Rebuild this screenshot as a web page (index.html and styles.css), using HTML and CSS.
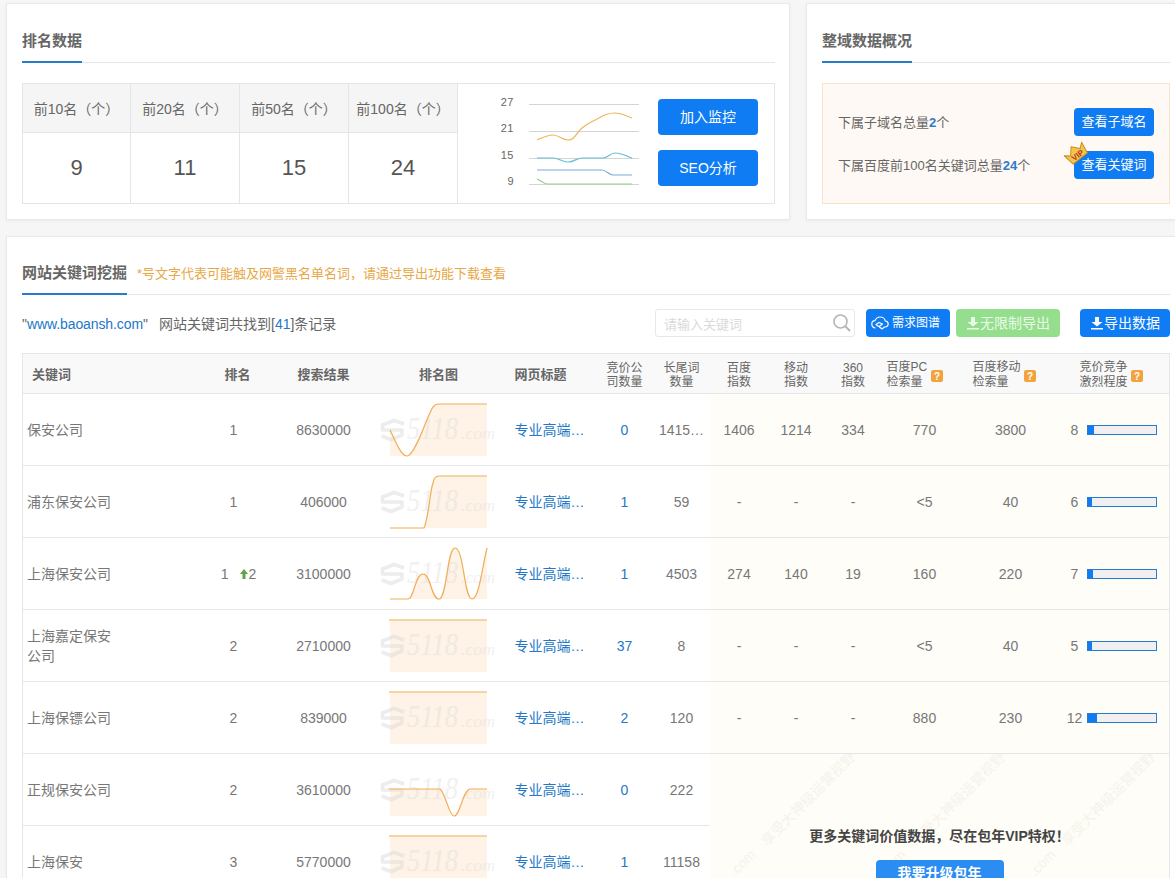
FILE: index.html
```html
<!DOCTYPE html>
<html lang="en">
<head>
    <meta charset="UTF-8">
    <title>网站关键词挖掘</title>
    <link rel="stylesheet" href="styles.css">
</head>
<body>
    <svg class="defs">
        <symbol id="wm" viewBox="0 0 120 72">
            <path d="M24 30 L14 26.500 L2.500 31 L2.500 36 H22 V41 L11 45.500 L1.500 42" fill="none" stroke="#dcdcdc" stroke-width="3.600" stroke-linejoin="round" opacity=".5"/>
            <text x="27" y="45" class="wm-num" textLength="51" lengthAdjust="spacingAndGlyphs">5118</text>
            <text x="81" y="45" class="wm-dom" textLength="34" lengthAdjust="spacingAndGlyphs">.com</text>
        </symbol>
        <symbol id="dl" viewBox="0 0 14 14">
            <path d="M5 1 H9 V6 H12.5 L7 10.5 L1.500 6 H5 Z M1 12 H13 V13.500 H1 Z" fill="currentColor"/>
        </symbol>
        <symbol id="hint" viewBox="0 0 12 12">
            <rect width="12" height="12" rx="2" fill="#f3a33e"/>
            <text x="6" y="10" class="hint-mark">?</text>
        </symbol>
    </svg>

    <div class="top-row">
        <section class="card">
            <div class="card-head"><h2 class="card-title">排名数据</h2></div>
            <div class="rank-box">
                <div class="rank-stats">
                    <div class="stat"><div class="stat-label">前10名（个）</div><div class="stat-value">9</div></div>
                    <div class="stat"><div class="stat-label">前20名（个）</div><div class="stat-value">11</div></div>
                    <div class="stat"><div class="stat-label">前50名（个）</div><div class="stat-value">15</div></div>
                    <div class="stat"><div class="stat-label">前100名（个）</div><div class="stat-value">24</div></div>
                </div>
                <svg class="trend" width="188" height="118" viewBox="0 0 188 118">
                    <g class="trend-grid">
                        <path d="M71 19.500 H181 M71 46.500 H181 M71 73.500 H181 M71 99.500 H181"/>
                    </g>
                    <text x="56" y="21" class="trend-label">27</text>
                    <text x="56" y="47" class="trend-label">21</text>
                    <text x="56" y="74" class="trend-label">15</text>
                    <text x="56" y="100" class="trend-label">9</text>
                    <path class="line" stroke="#f0b45a" d="M79 55 C86 52 90 50 95 50 C101 50 104 55 110 55 C117 55 118 48 124 43 C130 38 133 37 139 34 C146 30 150 28 157 28 C164 28 168 31 174 33"/>
                    <path class="line" stroke="#62bfd8" d="M79 73 H95 C101 73 104 77 110 77 C116 77 119 73 124 73 H145 C150 73 152 68 157 68 C164 68 168 71 174 73"/>
                    <path class="line" stroke="#7ea8dc" d="M79 85 H144 C148 85 151 90 155 90 H174"/>
                    <path class="line" stroke="#98cf8e" d="M79 94 C83 96 86 99 90 99 H174"/>
                </svg>
                <div class="rank-actions">
                    <a class="btn btn-big">加入监控</a>
                    <a class="btn btn-big">SEO分析</a>
                </div>
            </div>
        </section>

        <section class="card card-side">
            <div class="card-head"><h2 class="card-title">整域数据概况</h2></div>
            <div class="domain-box">
                <div class="domain-row">
                    <span>下属子域名总量<b>2</b>个</span>
                    <a class="btn btn-small">查看子域名</a>
                </div>
                <div class="domain-row">
                    <span>下属百度前100名关键词总量<b>24</b>个</span>
                    <a class="btn btn-small btn-vip">
                        <svg class="crown" width="26" height="26" viewBox="0 0 26 26">
                            <g transform="rotate(-38 13 13)">
                                <path d="M2 8 L7 12 L13 5 L19 12 L24 8 L22 20 H4 Z" fill="#f3c44f" stroke="#c98d1e" stroke-linejoin="round"/>
                                <text x="13" y="18.500" class="crown-text">VIP</text>
                            </g>
                        </svg>
                        查看关键词
                    </a>
                </div>
            </div>
        </section>
    </div>

    <section class="card card-main">
        <div class="card-head card-head-main">
            <h2 class="card-title">网站关键词挖掘</h2>
            <span class="head-note">*号文字代表可能触及网警黑名单名词，请通过导出功能下载查看</span>
        </div>

        <div class="toolbar">
            <div class="result-info">"<a class="site-link">www.baoansh.com</a>"<span class="result-count">网站关键词共找到[<a>41</a>]条记录</span></div>
            <div class="search-box">
                <span class="search-holder">请输入关键词</span>
                <svg width="20" height="20" viewBox="0 0 20 20"><circle cx="8.500" cy="8.500" r="6.500" fill="none" stroke="#b5b5b5" stroke-width="1.600"/><path d="M13.500 13.500 L18 18" stroke="#b5b5b5" stroke-width="2"/></svg>
            </div>
            <a class="btn btn-tool btn-map">
                <svg width="18" height="14" viewBox="0 0 18 14"><path d="M4.500 12 C2 12 .8 10 .8 8 C.8 6 2.200 4.600 4 4.600 C5 2.400 6.800 1 9 1 C12 1 14 3 14.200 5 C16 5.200 17.200 6.500 17.200 8 C17.200 10 15.500 11.200 13.500 11 L11 13 L8 10.500 L11.500 8 L8 6.500 L5 8.500 L7.500 10.500" fill="none" stroke="#fff" stroke-width="1.200" stroke-linejoin="round"/></svg>
                需求图谱
            </a>
            <a class="btn btn-tool btn-green"><svg width="14" height="14"><use href="#dl"/></svg>无限制导出</a>
            <a class="btn btn-tool btn-export"><svg width="14" height="14"><use href="#dl"/></svg>导出数据</a>
        </div>

        <div class="table-wrap">
            <table class="kw-table">
                <colgroup>
                    <col class="c-kw"><col class="c-rank"><col class="c-res"><col class="c-chart"><col class="c-title">
                    <col class="c-bid"><col class="c-long"><col class="c-idx"><col class="c-idx"><col class="c-idx">
                    <col class="c-vol"><col class="c-vol"><col class="c-comp">
                </colgroup>
                <thead>
                    <tr>
                        <th class="th-kw">关键词</th>
                        <th class="th-rank">排名</th>
                        <th>搜索结果</th>
                        <th>排名图</th>
                        <th class="th-title">网页标题</th>
                        <th class="th-two">竞价公<br>司数量</th>
                        <th class="th-two">长尾词<br>数量</th>
                        <th class="th-two">百度<br>指数</th>
                        <th class="th-two">移动<br>指数</th>
                        <th class="th-two">360<br>指数</th>
                        <th class="th-two th-left">百度PC<br>检索量<svg class="hint hint-pc"><use href="#hint"/></svg></th>
                        <th class="th-two th-left">百度移动<br>检索量<svg class="hint hint-mob"><use href="#hint"/></svg></th>
                        <th class="th-two th-comp">竞价竞争<br>激烈程度<svg class="hint hint-comp"><use href="#hint"/></svg></th>
                    </tr>
                </thead>
                <tbody>
                    <tr>
                        <td class="kw">保安公司</td><td>1</td><td>8630000</td>
                        <td class="chart"><svg width="120" height="71" viewBox="0 0 120 71"><path class="area" d="M10 36 C16 48 21 62 27 62 C34 62 44 32 49 21 C52 14 54 10 58 10 H107 V62 H10 Z"/><use href="#wm" width="120" height="72"/><path class="curve" d="M10 36 C16 48 21 62 27 62 C34 62 44 32 49 21 C52 14 54 10 58 10 H107"/></svg></td>
                        <td class="title"><a>专业高端…</a></td><td class="num"><a>0</a></td><td class="clip">1415…</td>
                        <td class="gold">1406</td><td class="gold">1214</td><td class="gold">334</td><td class="gold">770</td><td class="gold">3800</td>
                        <td class="gold comp"><span class="comp-num">8</span><span class="comp-bar"><i style="width:6px"></i></span></td>
                    </tr>
                    <tr>
                        <td class="kw">浦东保安公司</td><td>1</td><td>406000</td>
                        <td class="chart"><svg width="120" height="71" viewBox="0 0 120 71"><path class="area" d="M44 62 C49 50 50 24 53 17 C54 13 55 10 59 10 H107 V62 Z"/><use href="#wm" width="120" height="72"/><path class="curve" d="M10 62 H44 C49 50 50 24 53 17 C54 13 55 10 59 10 H107"/></svg></td>
                        <td class="title"><a>专业高端…</a></td><td class="num"><a>1</a></td><td>59</td>
                        <td class="gold">-</td><td class="gold">-</td><td class="gold">-</td><td class="gold">&lt;5</td><td class="gold">40</td>
                        <td class="gold comp"><span class="comp-num">6</span><span class="comp-bar"><i style="width:4px"></i></span></td>
                    </tr>
                    <tr>
                        <td class="kw">上海保安公司</td>
                        <td class="rank-up">1<span class="up"><svg width="8" height="10" viewBox="0 0 8 10"><path d="M4 0 L8 5 H5.500 V10 H2.500 V5 H0 Z" fill="#5da548"/></svg>2</span></td>
                        <td>3100000</td>
                        <td class="chart"><svg width="120" height="71" viewBox="0 0 120 71"><path class="area" d="M28 61 C34 61 35 36 43 36 C51 36 51 61 59 61 C67 61 67 10 75 10 C84 10 84 61 92 61 C99 61 102 30 107 10 V61 Z"/><use href="#wm" width="120" height="72"/><path class="curve" d="M10 61 H28 C34 61 35 36 43 36 C51 36 51 61 59 61 C67 61 67 10 75 10 C84 10 84 61 92 61 C99 61 102 30 107 10"/></svg></td>
                        <td class="title"><a>专业高端…</a></td><td class="num"><a>1</a></td><td>4503</td>
                        <td class="gold">274</td><td class="gold">140</td><td class="gold">19</td><td class="gold">160</td><td class="gold">220</td>
                        <td class="gold comp"><span class="comp-num">7</span><span class="comp-bar"><i style="width:5px"></i></span></td>
                    </tr>
                    <tr>
                        <td class="kw">上海嘉定保安公司</td><td>2</td><td>2710000</td>
                        <td class="chart"><svg width="120" height="71" viewBox="0 0 120 71"><path class="area" d="M10 10 H107 V62 H10 Z"/><use href="#wm" width="120" height="72"/><path class="curve" d="M9 10 H107"/></svg></td>
                        <td class="title"><a>专业高端…</a></td><td class="num"><a>37</a></td><td>8</td>
                        <td class="gold">-</td><td class="gold">-</td><td class="gold">-</td><td class="gold">&lt;5</td><td class="gold">40</td>
                        <td class="gold comp"><span class="comp-num">5</span><span class="comp-bar"><i style="width:4px"></i></span></td>
                    </tr>
                    <tr>
                        <td class="kw">上海保镖公司</td><td>2</td><td>839000</td>
                        <td class="chart"><svg width="120" height="71" viewBox="0 0 120 71"><path class="area" d="M10 10 H107 V62 H10 Z"/><use href="#wm" width="120" height="72"/><path class="curve" d="M9 10 H107"/></svg></td>
                        <td class="title"><a>专业高端…</a></td><td class="num"><a>2</a></td><td>120</td>
                        <td class="gold">-</td><td class="gold">-</td><td class="gold">-</td><td class="gold">880</td><td class="gold">230</td>
                        <td class="gold comp"><span class="comp-num">12</span><span class="comp-bar"><i style="width:9px"></i></span></td>
                    </tr>
                    <tr>
                        <td class="kw">正规保安公司</td><td>2</td><td>3610000</td>
                        <td class="chart"><svg width="120" height="71" viewBox="0 0 120 71"><path class="area" d="M10 35 H60 C66 40 69 62 74 62 C80 62 83 36 90 35 H107 V62 H10 Z"/><use href="#wm" width="120" height="72"/><path class="curve" d="M9 35 H60 C66 40 69 62 74 62 C80 62 83 36 90 35 H107"/></svg></td>
                        <td class="title"><a>专业高端…</a></td><td class="num"><a>0</a></td><td>222</td>
                        <td colspan="6"></td>
                    </tr>
                    <tr>
                        <td class="kw">上海保安</td><td>3</td><td>5770000</td>
                        <td class="chart"><svg width="120" height="71" viewBox="0 0 120 71"><path class="area" d="M10 10 H107 V62 H10 Z"/><use href="#wm" width="120" height="72"/><path class="curve" d="M9 10 H107"/></svg></td>
                        <td class="title"><a>专业高端…</a></td><td class="num"><a>1</a></td><td>11158</td>
                        <td colspan="6"></td>
                    </tr>
                </tbody>
            </table>

            <div class="vip-mask">
                <svg class="vip-marks" width="459" height="144" viewBox="0 0 459 144">
                    <text transform="translate(57 93) rotate(-45)">享受大神级运营视野</text>
                    <text transform="translate(207 93) rotate(-45)">享受大神级运营视野</text>
                    <text transform="translate(357 93) rotate(-45)">享受大神级运营视野</text>
                    <text transform="translate(25 123) rotate(-45)">.com</text>
                    <text transform="translate(175 123) rotate(-45)">.com</text>
                    <text transform="translate(325 123) rotate(-45)">.com</text>
                </svg>
                <p class="vip-text">更多关键词价值数据，尽在包年VIP特权！</p>
                <a class="btn vip-btn">我要升级包年</a>
            </div>
        </div>
    </section>
</body>
</html>
```

FILE: styles.css
```css
* {
    box-sizing: border-box;
    margin: 0;
    padding: 0;
}

html, body {
    height: 878px;
    overflow: hidden;
}

body {
    background-color: #f6f6f6;
    color: #666;
    font-family: "Liberation Sans", "Noto Sans CJK SC", sans-serif;
    font-size: 14px;
    padding: 3px 0 0 6px;
}

a {
    color: #2277c9;
    text-decoration: none;
}

.defs {
    display: none;
}

.wm-num {
    font-family: "Liberation Serif", serif;
    font-style: italic;
    font-size: 31px;
    fill: #dcdcdc;
    opacity: .4;
}

.wm-dom {
    font-family: "Liberation Serif", serif;
    font-style: italic;
    font-size: 17px;
    fill: #dcdcdc;
    opacity: .4;
}

.hint-mark {
    font-size: 10px;
    font-weight: bold;
    fill: #fff;
    text-anchor: middle;
}

.top-row {
    display: flex;
    gap: 16px;
    margin-bottom: 16px;
}

.card {
    flex: none;
    background-color: #fff;
    border: 1px solid #e9e9e9;
    box-shadow: 0 1px 3px rgba(0, 0, 0, 0.05);
    width: 784px;
    height: 217px;
    padding: 0 14px 0 15px;
}

.card-side {
    width: 369px;
    padding-right: 5px;
    border-right: 0;
}

.card-main {
    width: 1169px;
    height: 700px;
    padding-right: 5px;
    border-right: 0;
}

.card-head {
    height: 59px;
    border-bottom: 1px solid #e5e5e5;
    display: flex;
    align-items: flex-end;
}

.card-title {
    color: #666;
    font-size: 15px;
    font-weight: bold;
    line-height: 22px;
    padding-bottom: 9px;
    margin-bottom: -1px;
    border-bottom: 2px solid #2a7bc9;
}

.card-head-main {
    height: 58px;
    gap: 10px;
}

.head-note {
    color: #e8a746;
    font-size: 13px;
    line-height: 22px;
    padding-bottom: 9px;
}

.rank-box {
    display: flex;
    margin-top: 20px;
    height: 121px;
    border: 1px solid #e5e5e5;
    border-left: 0;
}

.rank-stats {
    display: flex;
}

.stat {
    width: 109px;
    border-right: 1px solid #e5e5e5;
    text-align: center;
}

.stat:first-child {
    border-left: 1px solid #e5e5e5;
}

.stat-label {
    height: 49px;
    line-height: 50px;
    background-color: #f5f5f5;
    border-bottom: 1px solid #e5e5e5;
    font-size: 14px;
    white-space: nowrap;
}

.stat-value {
    font-size: 22px;
    line-height: 70px;
    color: #555;
}

.trend {
    flex: none;
    align-self: center;
}

.trend-grid path {
    stroke: #d4d4d4;
    fill: none;
}

.trend-label {
    font-size: 11px;
    fill: #666;
    text-anchor: end;
    letter-spacing: .5px;
}

.line {
    fill: none;
    stroke-width: 1.200;
}

.rank-actions {
    display: flex;
    flex-direction: column;
    gap: 15px;
    margin-left: 12px;
    padding-top: 15px;
}

.btn {
    display: block;
    background-color: #0f7cf3;
    color: #fff;
    border-radius: 4px;
    text-align: center;
}

.btn-big {
    width: 100px;
    height: 36px;
    line-height: 36px;
}

.domain-box {
    margin-top: 20px;
    height: 121px;
    background-color: #fef9f4;
    border: 1px solid #f6e3c9;
    padding: 24px 15px 0;
    font-size: 13px;
}

.domain-row {
    display: flex;
    justify-content: space-between;
    align-items: center;
    height: 28px;
    margin-bottom: 15px;
}

.domain-row span {
    position: relative;
    top: -1px;
}

.domain-row b {
    color: #2a7bc9;
}

.btn-small {
    width: 80px;
    height: 28px;
    line-height: 28px;
    position: relative;
    font-size: 13px;
}

.crown {
    position: absolute;
    left: -11px;
    top: -11px;
}

.crown-text {
    font-size: 8px;
    font-weight: bold;
    fill: #b5381f;
    text-anchor: middle;
}

.toolbar {
    display: flex;
    align-items: center;
    height: 28px;
    margin-top: 14px;
}

.result-info {
    flex: 1;
    font-size: 14px;
}

.site-link {
    letter-spacing: -0.1px;
}

.result-count {
    margin-left: 11px;
}

.search-box {
    width: 200px;
    height: 28px;
    border: 1px solid #e8e8e8;
    border-radius: 3px;
    display: flex;
    align-items: center;
    justify-content: space-between;
    padding: 0 2px 0 8px;
}

.search-holder {
    color: #dadada;
    font-size: 13px;
}

.btn-tool {
    height: 28px;
    line-height: 28px;
    display: flex;
    align-items: center;
    justify-content: center;
    font-size: 14px;
}

.btn-map {
    width: 84px;
    margin-left: 11px;
    font-size: 12px;
    gap: 3px;
    justify-content: flex-start;
    padding-left: 5px;
}

.btn-green {
    width: 104px;
    margin-left: 6px;
    background-color: #95de8d;
    color: #eafbe8;
}

.btn-export {
    width: 90px;
    margin-left: 20px;
}

.table-wrap {
    position: relative;
    margin-top: 16px;
}

.kw-table {
    width: 1148px;
    table-layout: fixed;
    border-collapse: collapse;
    border: 1px solid #e6e6e6;
    font-size: 14px;
}

.c-kw { width: 176px; }
.c-rank { width: 70px; }
.c-res { width: 110px; }
.c-chart { width: 120px; }
.c-title { width: 98px; }
.c-bid { width: 56px; }
.c-long { width: 58px; }
.c-idx { width: 57px; }
.c-vol { width: 86px; }
.c-comp { width: 116px; }

.kw-table th {
    height: 40px;
    background-color: #f9f9f9;
    border-bottom: 1px solid #e6e6e6;
    color: #666;
    font-size: 13px;
    font-weight: bold;
    text-align: center;
}

.kw-table th.th-two {
    font-size: 12px;
    font-weight: normal;
    line-height: 14px;
    padding-top: 2px;
}

.kw-table th.th-kw {
    text-align: left;
    padding-left: 9px;
}

.kw-table th.th-rank {
    padding-left: 8px;
}

.kw-table th.th-title {
    text-align: left;
    padding-left: 16px;
}

.kw-table th.th-left {
    text-align: left;
    padding-left: 5px;
}

.kw-table th.th-comp {
    text-align: left;
    padding-left: 26px;
}

.hint {
    width: 12px;
    height: 12px;
    position: relative;
    top: -4px;
}

.hint-pc { margin-left: 8px; }
.hint-mob { margin-left: 15px; }
.hint-comp { margin-left: 3px; }

.kw-table td {
    height: 72px;
    border-bottom: 1px solid #e6e6e6;
    text-align: center;
    color: #777;
    line-height: 20px;
}

.kw-table td.kw {
    text-align: left;
    padding: 0 86px 0 4px;
}

.kw-table td.chart {
    padding: 0 0 0 1px;
    line-height: 0;
}

.chart svg {
    display: block;
}

.area {
    fill: #fef3e6;
}

.curve {
    fill: none;
    stroke: #f0ad55;
    stroke-width: 1.200;
}

.kw-table td.title {
    text-align: left;
    padding-left: 16px;
    white-space: nowrap;
}

.kw-table td.clip {
    white-space: nowrap;
}

.up {
    margin-left: 11px;
    white-space: nowrap;
}

.up svg {
    margin-right: 1px;
}

.kw-table td.rank-up {
    padding-left: 10px;
}

.kw-table td.gold {
    background-color: #fffdf7;
}

.kw-table td.comp {
    text-align: left;
    white-space: nowrap;
}

.comp-num {
    display: inline-block;
    width: 33px;
    padding-left: 9px;
    text-align: center;
    vertical-align: middle;
}

.comp-bar {
    display: inline-block;
    width: 70px;
    height: 10px;
    background-color: #f0f0f3;
    border: 1px solid #2a7bc9;
    vertical-align: middle;
}

.comp-bar i {
    display: block;
    height: 8px;
    background-color: #0f7cf3;
}

.vip-mask {
    position: absolute;
    left: 688px;
    top: 401px;
    width: 459px;
    height: 144px;
    background-color: #fffdf7;
    text-align: center;
}

.vip-marks {
    position: absolute;
    left: 0;
    top: 0;
}

.vip-marks text {
    font-size: 14px;
    fill: #f5f3ec;
}

.vip-text {
    position: relative;
    margin-top: 72px;
    color: #444;
    font-size: 14px;
    font-weight: bold;
    line-height: 20px;
}

.vip-btn {
    position: relative;
    width: 128px;
    height: 36px;
    line-height: 26px;
    margin: 14px auto 0;
    background-color: #2b8cf2;
    font-size: 14px;
    font-weight: bold;
}
```
